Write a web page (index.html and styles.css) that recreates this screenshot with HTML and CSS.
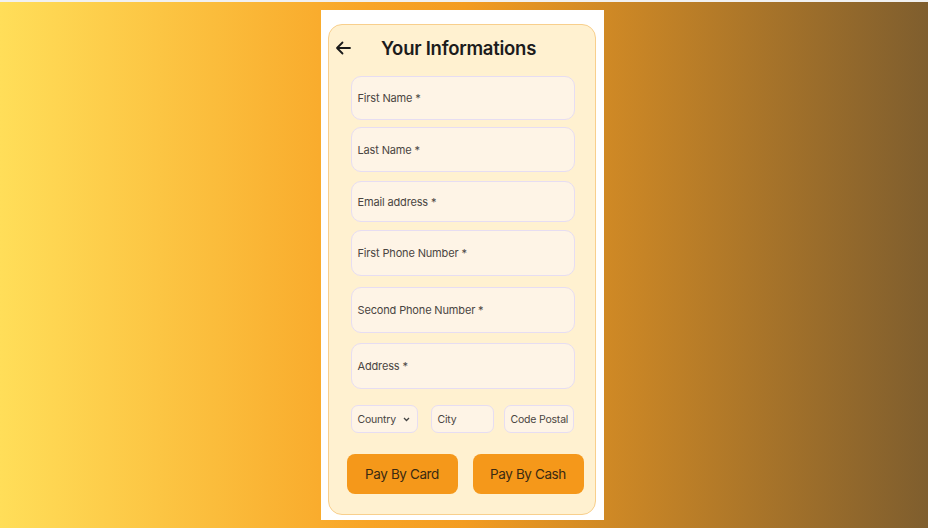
FILE: index.html
```html
<!DOCTYPE html>
<html lang="en">
<head>
<meta charset="utf-8">
<title>Your Informations</title>
<link rel="stylesheet" href="styles.css">
</head>
<body>
<div class="stage">
  <div class="sheet">
    <div class="card">
      <div class="header">
        <svg class="back" width="16" height="14" viewBox="0 0 16 14" aria-hidden="true">
          <path d="M15 7H2M7.5 1.5L2 7l5.5 5.5" fill="none" stroke="#1a1a1a" stroke-width="1.8" stroke-linecap="round" stroke-linejoin="round"/>
        </svg>
        <h1 class="title">Your Informations</h1>
      </div>
      <div class="field f1">First Name *</div>
      <div class="field f2">Last Name *</div>
      <div class="field f3">Email address *</div>
      <div class="field f4">First Phone Number *</div>
      <div class="field f5">Second Phone Number *</div>
      <div class="field f6">Address *</div>
      <div class="smallrow">
        <div class="small country">Country
          <svg class="chev" width="7" height="5" viewBox="0 0 7 5" aria-hidden="true"><path d="M1 1l2.5 2.5L6 1" fill="none" stroke="#444" stroke-width="1.3"/></svg>
        </div>
        <div class="small city">City</div>
        <div class="small postal">Code Postal</div>
      </div>
      <div class="buttons">
        <button class="btn">Pay By Card</button>
        <button class="btn">Pay By Cash</button>
      </div>
    </div>
  </div>
</div>
</body>
</html>
```
FILE: styles.css
```css
html, body {
  margin: 0;
  padding: 0;
  background: #f1f1f1;
  font-family: "Inter", "Noto Sans", sans-serif;
}
.stage {
  margin-top: 2px;
  height: 526px;
  background: linear-gradient(90deg, #FFDE59 0%, #F8A426 40%, #F39C21 50%, #7F5E2E 100%);
  display: flex;
  justify-content: center;
  align-items: flex-start;
  padding-right: 3px;
  box-sizing: border-box;
}
.sheet {
  margin-top: 8px;
  width: 283px;
  height: 510px;
  background: #ffffff;
  padding: 14px 8px 5px 7px;
  box-sizing: border-box;
}
.card {
  width: 268px;
  height: 491px;
  box-sizing: border-box;
  background: #FFF1D0;
  border: 1.5px solid #F8CF8C;
  border-radius: 14px;
  display: flex;
  flex-direction: column;
  align-items: flex-start;
}
.header {
  display: flex;
  align-items: center;
  height: 24px;
  margin-top: 11px;
  padding-left: 6px;
}
.back { display: block; }
.title {
  margin: 0 0 0 30px;
  font-size: 18.5px;
  font-weight: 600;
  color: #1c1c1c;
  letter-spacing: -0.25px;
}
.field {
  margin-left: 21.5px;
  width: 224px;
  box-sizing: border-box;
  background: #FEF4E6;
  border: 1.5px solid #E6DDF2;
  border-radius: 10px;
  padding-left: 6px;
  font-size: 11px;
  letter-spacing: -0.15px;
  color: #4a4542;
  display: flex;
  align-items: center;
}
.f1 { margin-top: 16px; height: 44px; }
.f2 { margin-top: 7px; height: 45px; }
.f3 { margin-top: 9px; height: 41px; }
.f4 { margin-top: 8px; height: 46px; }
.f5 { margin-top: 11px; height: 46px; }
.f6 { margin-top: 10px; height: 46px; }
.smallrow {
  margin-top: 16px;
  margin-left: 21.5px;
  display: flex;
  height: 28px;
}
.small {
  box-sizing: border-box;
  height: 28px;
  background: #FEF4E6;
  border: 1.5px solid #E6DDF2;
  border-radius: 7px;
  font-size: 10.5px;
  letter-spacing: -0.2px;
  color: #4a4542;
  display: flex;
  align-items: center;
  padding-left: 6px;
}
.country { width: 67px; }
.chev { margin-left: 7px; }
.city { width: 63px; margin-left: 13px; }
.postal { width: 70px; margin-left: 10px; }
.buttons {
  margin-top: 21px;
  margin-left: 17.5px;
  display: flex;
  gap: 15px;
}
.btn {
  width: 111px;
  height: 40px;
  border: none;
  border-radius: 8px;
  background: #F5981A;
  color: #3a2a12;
  font-family: "Inter", "Noto Sans", sans-serif;
  font-size: 13.5px;
  letter-spacing: -0.4px;
  padding: 0;
}
```
